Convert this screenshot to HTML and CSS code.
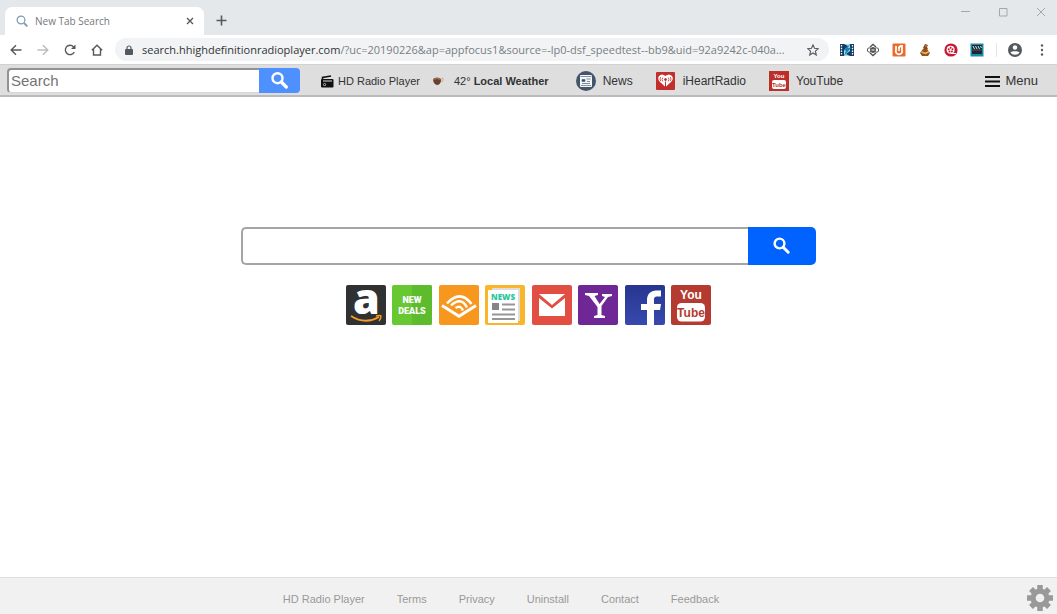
FILE: index.html
```html
<!DOCTYPE html>
<html lang="en">
<head>
<meta charset="utf-8">
<title>New Tab Search</title>
<link rel="stylesheet" href="styles.css">
</head>
<body>
<header class="tabstrip">
  <div class="tab">
    <svg class="tab-icon" viewBox="0 0 12 12" fill="none" stroke="#7d9bb5" stroke-width="1.2"><circle cx="5" cy="5" r="3.9"/><path d="M8 8l3.4 3.4" stroke-width="1.8"/></svg>
    <span class="tab-title">New Tab Search</span>
    <button class="plain" aria-label="Close tab"><svg width="8" height="8" viewBox="0 0 8 8" stroke="#55595d" stroke-width="1.4"><path d="M1 1l6 6M7 1L1 7"/></svg></button>
  </div>
  <button class="plain new-tab" aria-label="New tab"><svg width="11" height="11" viewBox="0 0 11 11" stroke="#55595d" stroke-width="1.6"><path d="M5.500 .5v10M.5 5.500h10"/></svg></button>
  <div class="window-buttons">
    <button class="plain" aria-label="Minimize"><svg width="10" height="10" viewBox="0 0 10 10" stroke="#a5a8ab"><path d="M1 4.500h9"/></svg></button>
    <button class="plain" aria-label="Maximize"><svg width="10" height="10" viewBox="0 0 10 10" fill="none" stroke="#a5a8ab"><path d="M1.500 1.500h7.500v7.500h-7.500z"/></svg></button>
    <button class="plain" aria-label="Close"><svg width="10" height="10" viewBox="0 0 10 10" stroke="#a5a8ab"><path d="M1 1l8 8M9 1L1 9"/></svg></button>
  </div>
</header>

<div class="browser-bar">
  <div class="nav-buttons">
    <button class="plain" aria-label="Back"><svg width="12" height="12" viewBox="0 0 12 12" fill="none" stroke="#55595d" stroke-width="1.4"><path d="M11.500 6H1.500M6 1.200L1.200 6L6 10.800"/></svg></button>
    <button class="plain" aria-label="Forward"><svg width="12" height="12" viewBox="0 0 12 12" fill="none" stroke="#babdc0" stroke-width="1.4"><path d="M.5 6h10M6 1.200L10.800 6L6 10.800"/></svg></button>
    <button class="plain" aria-label="Reload"><svg width="12" height="12" viewBox="0 0 12 12" fill="none" stroke="#55595d" stroke-width="1.400"><path d="M10.300 8A4.700 4.700 0 1 1 9.500 2.700L10.800 4"/><path d="M11.500 .5v4.500H7z" fill="#55595d" stroke="none"/></svg></button>
    <button class="plain" aria-label="Home"><svg width="12" height="12" viewBox="0 0 12 12" fill="none" stroke="#55595d" stroke-width="1.400"><path d="M.8 6.200L6 1.200l5.200 5M2.500 5v6h7V5"/></svg></button>
  </div>
  <div class="address">
    <svg width="8" height="10" viewBox="0 0 8 10"><rect y="4" width="8" height="6" rx="1" fill="#55595d"/><path d="M2 4.500V3a2 2 0 0 1 4 0v1.500" fill="none" stroke="#55595d" stroke-width="1.200"/></svg>
    <span class="url"><span class="url-host">search.hhighdefinitionradioplayer.com</span>/?uc=20190226&amp;ap=appfocus1&amp;source=-lp0-dsf_speedtest--bb9&amp;uid=92a9242c-040a...</span>
    <button class="plain" aria-label="Bookmark"><svg width="12" height="12" viewBox="0 0 12 12" fill="none" stroke="#55595d" stroke-width="1.100"><path d="M6 .9l1.500 3.400 3.800.4-2.900 2.500.9 3.800L6 9l-3.300 2 .9-3.800L.7 4.700l3.800-.4z"/></svg></button>
  </div>
  <div class="extensions">
    <svg viewBox="0 0 14 14"><path d="M0 1h14v12H0z" fill="#123b68"/><path d="M4 1h6v12H4z" fill="#a5dce8"/><path d="M10 1L3.500 7.500H6L4 13l7-8H8l2-4z" fill="#1685b5"/><path d="M4 1l4 2-4 4M10 13l-4-2 4-3" fill="#123b68"/><path d="M1.500 2v10M12.500 2v10" stroke="#fff" stroke-width="1.300" stroke-dasharray="1.500 1.200"/></svg>
    <svg viewBox="0 0 14 14" fill="none" stroke="#555"><path d="M4 4l3-2.500L10 4M4 10l3 2.500 3-2.500" stroke-width="1.400"/><circle cx="3.500" cy="7" r="2.200"/><circle cx="10.500" cy="7" r="2.200"/><circle cx="7" cy="7" r="2.500" fill="#555"/><path d="M5.500 7h3" stroke="#fff"/></svg>
    <svg viewBox="0 0 14 14"><rect x=".5" y=".5" width="13" height="13" rx="1" fill="#eb6b2d"/><path d="M4 3v4a3.200 3.200 0 1 0 6 0V3H8.500l-2 2" fill="none" stroke="#fff" stroke-width="1.800"/><path d="M7 4v4" stroke="#fff" stroke-width="1.500"/></svg>
    <svg viewBox="0 0 14 14"><path d="M7 1l3 1-1 2 1 2-3 1-2-2z" fill="#8b461d"/><path d="M5 6h4l3 4-2 3H4l-2-3z" fill="#935020"/><path d="M3.500 9l4 1.500L11 8.500" stroke="#edbd51" stroke-width="1.500" fill="none"/><circle cx="8" cy="3" r=".8" fill="#d99752"/></svg>
    <svg viewBox="0 0 14 14"><circle cx="7" cy="7" r="6.600" fill="#c71932"/><circle cx="6.600" cy="6.800" r="4" fill="#fff"/><g fill="#c71932"><circle cx="6.600" cy="4.700" r="1"/><circle cx="4.700" cy="6.300" r="1"/><circle cx="8.500" cy="6.300" r="1"/><circle cx="5.500" cy="8.600" r="1"/><circle cx="7.900" cy="8.600" r="1"/></g><path d="M7 10.500h5" stroke="#fff"/></svg>
    <svg viewBox="0 0 14 14"><rect x=".5" y=".5" width="13" height="13" fill="#168db0"/><path d="M2 2h10v9H2z" fill="#20262d"/><path d="M3 3l1.500 3M5.500 3L7 6M8 3l1.500 3M10.500 3l1 2" stroke="#d5e5e9"/><path d="M2 7h10" stroke="#66818c" stroke-width=".6"/></svg>
  </div>
  <div class="browser-menu">
    <svg width="14" height="14" viewBox="0 0 14 14"><circle cx="7" cy="7" r="7" fill="#55595d"/><circle cx="7" cy="4.500" r="2.200" fill="#fff"/><path d="M2.500 9.500C3.500 7.700 10.500 7.700 11.500 9.500C9.800 12.500 4.200 12.500 2.500 9.500z" fill="#fff"/></svg>
    <button class="plain" aria-label="Browser menu"><svg width="4" height="12" viewBox="0 0 4 12" fill="#55595d"><circle cx="2" cy="1.500" r="1.200"/><circle cx="2" cy="6" r="1.200"/><circle cx="2" cy="10.500" r="1.200"/></svg></button>
  </div>
</div>

<nav class="page-bar">
  <form class="mini-search">
    <input type="text" placeholder="Search" aria-label="Search">
    <button type="button" aria-label="Search"><svg width="18" height="18" viewBox="0 0 18 18" fill="none" stroke="#fff"><circle cx="6.500" cy="7.200" r="5" stroke-width="2.400"/><path d="M10.300 11l5 5" stroke-width="3.200" stroke-linecap="round"/></svg></button>
  </form>
  <div class="links">
    <a class="radio" href="#"><svg width="13" height="13" viewBox="0 0 13 13"><path d="M1.500 4.500V2.500L10 1" stroke="#111" stroke-width="1.500" fill="none"/><rect y="4" width="12.500" height="8.500" rx="1" fill="#111"/><path d="M2 6h9" stroke="#ddd"/><circle cx="3.600" cy="9.500" r="1.500" fill="#aaa"/><circle cx="3.600" cy="9.500" r=".7"/></svg>HD Radio Player</a>
    <a class="weather" href="#"><svg width="11" height="11" viewBox="0 0 11 11"><path d="M0 3q4-3 8 0v2Q7 9 4 9 0 8 0 3z" fill="#68402c"/><path d="M.5 3.500q3.500-2 7 0" fill="none" stroke="#a77c5d"/><path d="M8 3l2-1v3L8 6" fill="none" stroke="#d7a77e"/></svg><span>42° <b>Local Weather</b></span></a>
    <a href="#"><svg width="20" height="20" viewBox="0 0 20 20"><circle cx="10" cy="10" r="10" fill="#43546b"/><rect x="4" y="4" width="12" height="12" rx="1" fill="#f3f6f8"/><path d="M4.500 5.500h11M5 14.500h10" stroke="#8493a4"/><path d="M6 8.500h3v2H6zM10.500 8h4M11 10.500h3M6 12.500h8" fill="#344861" stroke="#5c6e85" stroke-width=".8"/></svg>News</a>
    <a href="#"><svg width="20" height="20" viewBox="0 0 20 20"><rect y="1" width="19" height="18" rx="1" fill="#c22e2c"/><path d="M9.500 16L4 11Q1 8 3 5Q6 2 9.500 5Q13 2 16 5Q18 8 15 11z" fill="#fff"/><g fill="none" stroke="#c22e2c"><path d="M6.800 6.500q-1.500 2 0 4M12.200 6.500q1.500 2 0 4M4.700 6q-1.500 2 0 4M14.300 6q1.500 2 0 4" stroke-width=".8"/><circle cx="9.500" cy="8.500" r="1" fill="#c22e2c"/><path d="M9.500 10.500v5.500"/></g></svg>iHeartRadio</a>
    <a href="#"><svg width="20" height="20" viewBox="0 0 40 40"><rect width="40" height="40" fill="#bd3029"/><rect x="6" y="18" width="28" height="18" rx="4" fill="#fff"/><g font-family="Liberation Sans" font-size="12" font-weight="bold" text-anchor="middle"><text x="20" y="14" fill="#fff">You</text><text x="20" y="31" fill="#bd3029">Tube</text></g></svg>YouTube</a>
  </div>
  <button class="plain menu"><svg width="15" height="11" viewBox="0 0 15 11" stroke="#111" stroke-width="2"><path d="M0 1h15M0 5.500h15M0 10h15"/></svg>Menu</button>
</nav>

<main class="content">
  <form class="main-search">
    <input type="text" aria-label="Search the web">
    <button type="button" aria-label="Search the web"><svg width="18" height="18" viewBox="0 0 18 18" fill="none" stroke="#fff"><circle cx="6.500" cy="6.500" r="4.900" stroke-width="2.400"/><path d="M10.200 10.200l5 5" stroke-width="3" stroke-linecap="round"/></svg></button>
  </form>
  <div class="tiles">
    <a href="#" aria-label="Amazon"><svg viewBox="0 0 40 40"><rect width="40" height="40" rx="2" fill="#303133"/><text x="20.500" y="29" font-family="Open Sans" font-size="43" font-weight="800" text-anchor="middle" fill="#fff">a</text><path d="M5 31q14 9 28 1" fill="none" stroke="#f79b24" stroke-width="1.800"/><path d="M30 31q4-1 5 0 0 3-2 5" fill="none" stroke="#f79b24" stroke-width="1.400"/></svg></a>
    <a href="#" aria-label="New deals"><svg viewBox="0 0 40 40"><rect width="40" height="40" rx="2" fill="#67c832"/><path d="M20 0h18a2 2 0 0 1 2 2v36a2 2 0 0 1-2 2H20z" fill="#5dbb2e"/><g font-family="Roboto" font-size="9" font-weight="900" text-anchor="middle" fill="#fff"><text x="20" y="18">NEW</text><text x="20" y="29">DEALS</text></g></svg></a>
    <a href="#" aria-label="Audible"><svg viewBox="0 0 40 40"><rect width="40" height="40" rx="2" fill="#f7971e"/><g fill="none" stroke="#fff"><path d="M3 20.500l17 10.800 17-10.800" stroke-width="3"/><path d="M8 18.500Q21 4 32.500 19" stroke-width="2.600"/><path d="M12 20.500Q22 11 28 22.500" stroke-width="2.400"/><path d="M16.500 23q5-3.500 7.500 2.500" stroke-width="2.400"/></g></svg></a>
    <a href="#" aria-label="News"><svg viewBox="0 0 40 40"><rect width="40" height="40" rx="2" fill="#f9b62b"/><path d="M7 3h28v33H7z" fill="#dedede"/><path d="M3 5h30v33H3z" fill="#fff"/><text x="18" y="15" font-family="Open Sans" font-size="8" font-weight="800" text-anchor="middle" fill="#2cc5a0">NEWS</text><path d="M7 18h7v7H7z" fill="#858585"/><path d="M17 19.500h13M17 24.500h13M7 29.500h23M7 34h23" stroke="#969696" stroke-width="1.800"/></svg></a>
    <a href="#" aria-label="Gmail"><svg viewBox="0 0 40 40"><rect width="40" height="40" rx="2" fill="#e34e43"/><path d="M7 9h26v22H7z" fill="#fff"/><path d="M7 9l13 11L33 9v4L20 23.500 7 13z" fill="#e34e43"/></svg></a>
    <a href="#" aria-label="Yahoo"><svg viewBox="0 0 40 40"><rect width="40" height="40" rx="2" fill="#6f2795"/><path d="M7 8h13v2l-3.500 1L21.500 19 27 12l-3-1V9h10v2l-4 1-6.500 9v9l3.500 1v2H16v-2l3.500-1v-8L11 11 7 10z" fill="#fff"/></svg></a>
    <a href="#" aria-label="Facebook"><svg viewBox="0 0 40 40"><defs><linearGradient id="fb" x2="0" y2="1"><stop stop-color="#26368f"/><stop offset="1" stop-color="#3949ae"/></linearGradient></defs><rect width="40" height="40" rx="2" fill="url(#fb)"/><path d="M22 40V25h-6v-6h6v-4c0-6 4-9.500 9-9.500h5v6h-3.500c-3 0-3.500 1.500-3.500 3.500v4h7l-1 6h-6v15z" fill="#fff"/></svg></a>
    <a href="#" aria-label="YouTube"><svg viewBox="0 0 40 40"><rect width="40" height="40" rx="2" fill="#b53b30"/><rect x="6" y="18" width="28" height="18.500" rx="4.500" fill="#fff"/><g font-family="Liberation Sans" font-weight="bold" font-size="12" text-anchor="middle"><text x="20" y="14" fill="#fff">You</text><text x="20" y="31.500" fill="#b53b30">Tube</text></g></svg></a>
  </div>
</main>

<footer class="footer">
  <nav class="footer-links"><a href="#">HD Radio Player</a><a href="#">Terms</a><a href="#">Privacy</a><a href="#">Uninstall</a><a href="#">Contact</a><a href="#">Feedback</a></nav>
  <button class="plain" aria-label="Settings"><svg width="26" height="26" viewBox="0 0 26 26"><g stroke="#999" stroke-width="5.500"><path d="M13 0v26M0 13h26M4 4l18 18M22 4L4 22"/></g><circle cx="13" cy="13" r="9.500" fill="#999"/><circle cx="13" cy="13" r="4.300" fill="#f1f1f1"/></svg></button>
</footer>
</body>
</html>
```
FILE: styles.css
```css
* { box-sizing: border-box; }

body {
  margin: 0;
  min-height: 100vh;
  display: flex;
  flex-direction: column;
  background: #fff;
  color: #333;
  font: 11px/16px "Liberation Sans", Arial, sans-serif;
}

a { color: inherit; text-decoration: none; }
svg { display: block; flex: none; }
button, input { font: inherit; border: 0; padding: 0; }
.plain { display: block; background: none; color: inherit; }

.tabstrip {
  display: flex;
  height: 35px;
  padding-left: 5px;
  background: #e4e8eb;
}
.tab {
  display: flex;
  align-items: center;
  gap: 7px;
  width: 199px;
  margin-top: 7px;
  padding: 0 10px 0 11px;
  border-radius: 7px 7px 0 0;
  background: #fff;
  font: 10px/14px "Open Sans", sans-serif;
  color: #74787c;
}
.tab-icon { width: 12px; height: 12px; }
.tab-title { flex: 1; }
.new-tab { margin: 6px 0 0 12px; }
.window-buttons {
  display: flex;
  gap: 28px;
  align-items: flex-start;
  margin-left: auto;
  padding: 7px 11px 0 0;
}

.browser-bar {
  display: flex;
  align-items: center;
  height: 29px;
  padding: 0 13px 0 10px;
  background: #fff;
}
.nav-buttons { display: flex; gap: 15px; margin-right: 12px; }
.address {
  display: flex;
  flex: 1;
  min-width: 0;
  align-items: center;
  gap: 9px;
  height: 23px;
  padding: 0 10px;
  border-radius: 12px;
  background: #f1f3f4;
}
.url {
  flex: 1;
  min-width: 0;
  overflow: hidden;
  white-space: nowrap;
  font: 11px/18px "Open Sans", sans-serif;
  color: #7a7e82;
}
.url-host { color: #303336; }
.extensions { display: flex; gap: 12px; margin-left: 11px; }
.extensions svg { width: 14px; height: 14px; }
.browser-menu {
  display: flex;
  align-items: center;
  gap: 18px;
  margin-left: 12px;
  padding-left: 11px;
  border-left: 1px solid #e6e6e6;
}

.page-bar {
  display: flex;
  align-items: center;
  height: 33px;
  padding: 0 19px 0 7px;
  background: #dedede;
  border-top: 1px solid #d2d2d2;
  border-bottom: 2px solid #bababa;
}
.mini-search { display: flex; height: 25px; }
.mini-search input {
  width: 252px;
  padding: 0 2px;
  border: 2px solid #929292;
  border-right: 0;
  border-bottom: 1px solid #d5d5d5;
  border-radius: 4px 0 0 4px;
  font-size: 15px;
}
.mini-search input::placeholder { color: #757575; }
.mini-search button {
  display: grid;
  place-items: center;
  width: 41px;
  border-radius: 0 4px 4px 0;
  background: #4d90fe;
}
.links {
  display: flex;
  align-items: center;
  gap: 23px;
  margin-left: 21px;
  padding-top: 2px;
  font-size: 12px;
}
.links a { display: flex; align-items: center; gap: 7px; }
.links .radio, .links .weather { font-size: 11px; }
.links .radio { gap: 4px; margin-right: -10px; }
.links .weather { gap: 10px; margin-right: 4px; }
.menu {
  display: flex;
  align-items: center;
  gap: 5px;
  margin-left: auto;
  padding-top: 2px;
  font-size: 13px;
}

.content {
  flex: 1;
  display: flex;
  flex-direction: column;
  align-items: center;
  padding: 130px 20px 20px;
}
.main-search { display: flex; width: 100%; max-width: 575px; height: 38px; }
.main-search input {
  flex: 1;
  min-width: 0;
  padding: 0 10px;
  border: 2px solid #a5a5a5;
  border-right: 0;
  border-radius: 5px 0 0 5px;
  font-size: 16px;
}
.main-search button {
  display: grid;
  place-items: center;
  width: 68px;
  border-radius: 0 5px 5px 0;
  background: #0062ff;
}
.tiles {
  display: flex;
  justify-content: space-between;
  width: 100%;
  max-width: 366px;
  margin-top: 20px;
}
.tiles svg { width: 40px; height: 40px; overflow: visible; }

.footer {
  display: flex;
  align-items: center;
  gap: 25px;
  height: 37px;
  padding: 3px 4px 0 0;
  background: #f1f1f1;
  border-top: 1px solid #dfdfdf;
  color: #999;
}
.footer-links { display: flex; flex: 1; justify-content: center; gap: 32px; padding-top: 2px; }
```
